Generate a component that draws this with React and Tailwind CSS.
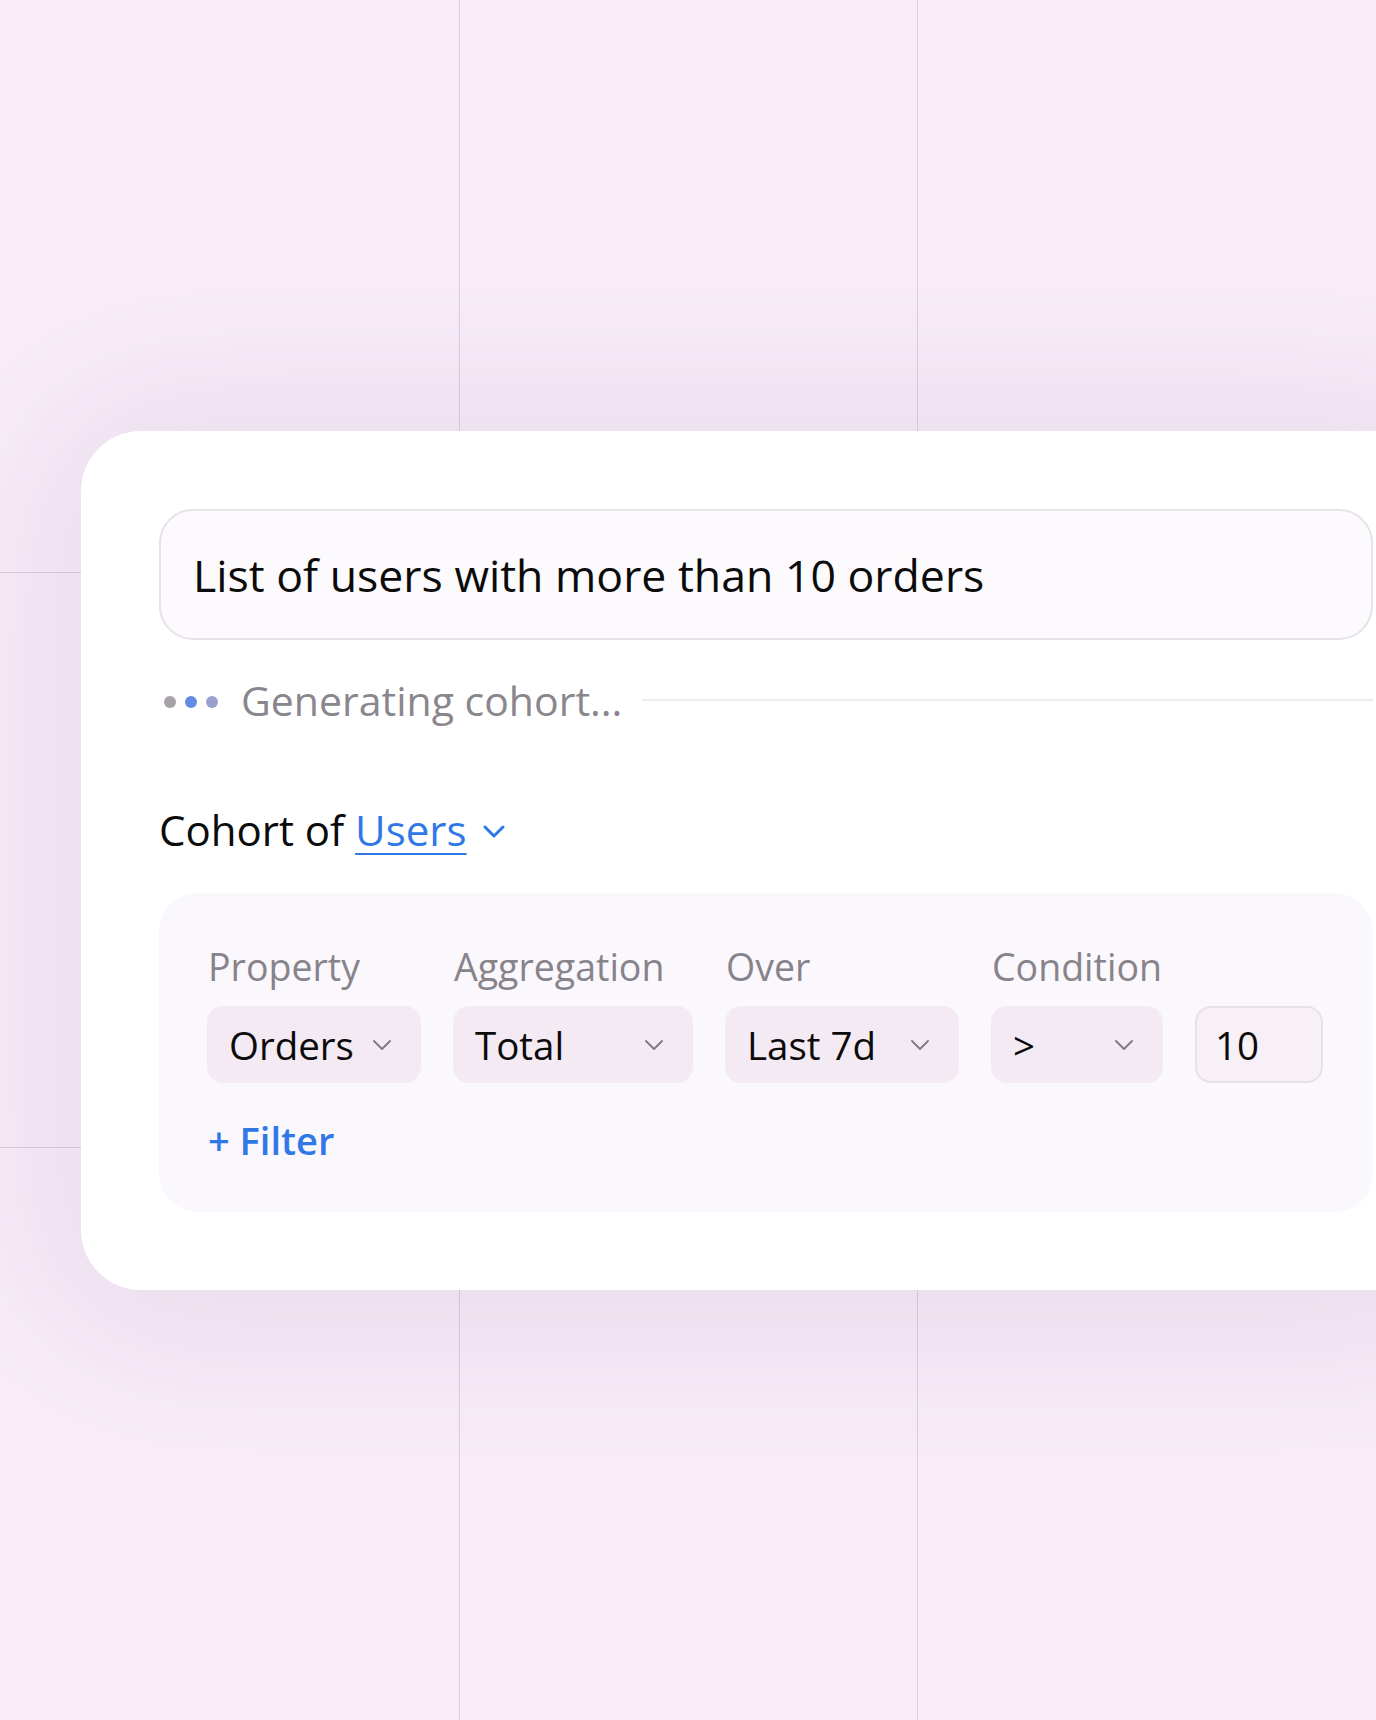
import React from "react";

// Small thin chevron used inside the select pills
function SelectChevron() {
  return (
    <svg width="18" height="10" viewBox="0 0 18 10" fill="none" className="shrink-0 text-[#7e7a82]">
      <path d="M1 1l8 8 8-8" stroke="currentColor" strokeWidth="1.8" strokeLinecap="round" strokeLinejoin="round" />
    </svg>
  );
}

// Bolder chevron next to the entity picker
function EntityChevron() {
  return (
    <svg width="22" height="13" viewBox="0 0 22 13" fill="none" className="shrink-0 text-[#2f78e6]">
      <path d="M2 2l9 9 9-9" stroke="currentColor" strokeWidth="3" strokeLinecap="round" strokeLinejoin="round" />
    </svg>
  );
}

const fields = [
  { label: "Property", value: "Orders", width: "w-[213px]" },
  { label: "Aggregation", value: "Total", width: "w-[239px]" },
  { label: "Over", value: "Last 7d", width: "w-[233px]" },
  { label: "Condition", value: ">", width: "w-[171px]" },
];

export default function App() {
  return (
    <div className="relative w-[1376px] h-[1720px] overflow-hidden bg-[#f8edf9] font-['Open_Sans',sans-serif]">
      {/* canvas grid */}
      <div className="absolute left-[459px] top-0 h-full w-px bg-[#d9d0df]" />
      <div className="absolute left-[917px] top-0 h-full w-px bg-[#d9d0df]" />
      <div className="absolute top-[572px] left-0 w-full h-px bg-[#d9d0df]" />
      <div className="absolute top-[1147px] left-0 w-full h-px bg-[#d9d0df]" />

      <div className="relative pt-[431px] pl-[81px]">
        <div className="w-[1370px] rounded-[60px] bg-white p-[78px] shadow-[0_10px_170px_30px_rgba(100,60,110,0.11)]">
          {/* prompt */}
          <div className="h-[131px] rounded-[34px] border-2 border-[#e7e2ea] bg-[#fcfafd] flex items-center pl-[32px] text-[44.6px] leading-[44px] text-[#0b0b0b]">
            List of users with more than 10 orders
          </div>

          {/* status */}
          <div className="mt-[40px] h-[40px] flex items-center">
            <div className="ml-[5px] mt-[3px] flex items-center gap-[9px]">
              <span className="w-3 h-3 rounded-full bg-[#a6a0a9]" />
              <span className="w-3 h-3 rounded-full bg-[#628be2]" />
              <span className="w-3 h-3 rounded-full bg-[#99a1cc]" />
            </div>
            <span className="ml-[23px] text-[41px] leading-[40px] text-[#8a868e]">Generating cohort...</span>
            <div className="ml-[20px] flex-1 h-[2px] bg-[#efeaf1]" />
          </div>

          {/* entity */}
          <div className="mt-[90px] h-[40px] flex items-center text-[42px] leading-[40px] text-[#0b0b0b]">
            <span className="whitespace-pre">Cohort of </span>
            <span className="text-[#2f78e6] underline decoration-2 underline-offset-[7px]">Users</span>
            <span className="ml-[16px] mt-[2px]">
              <EntityChevron />
            </span>
          </div>

          {/* filter builder */}
          <div className="mt-[43px] rounded-[38px] bg-[#faf7fd] pt-[56px] pb-[53px] pl-[49px]">
            <div className="flex gap-[33px]">
              {fields.map((f) => (
                <div key={f.label} className={`flex flex-col gap-[21px] ${f.width}`}>
                  <div className="h-[36px] text-[37.5px] leading-[36px] text-[#87838a] whitespace-nowrap">{f.label}</div>
                  <div className="-ml-px h-[77px] rounded-[16px] bg-[#f3eaf3] flex items-center justify-between pl-[22px] pr-[30px] text-[38.5px] leading-[38px] text-[#0b0b0b]">
                    <span>{f.value}</span>
                    <SelectChevron />
                  </div>
                </div>
              ))}
              <div className="flex flex-col gap-[21px] w-[127px]">
                <div className="h-[36px]" />
                <div className="-ml-px h-[77px] rounded-[16px] border-2 border-[#e8e1ea] bg-[#f7f1f7] flex items-center pl-[18px] text-[38.5px] leading-[38px] text-[#0b0b0b]">
                  10
                </div>
              </div>
            </div>
            <div className="mt-[38px] h-[38px] text-[38px] leading-[38px] font-semibold text-[#2f78e6]">+ Filter</div>
          </div>
        </div>
      </div>
    </div>
  );
}
